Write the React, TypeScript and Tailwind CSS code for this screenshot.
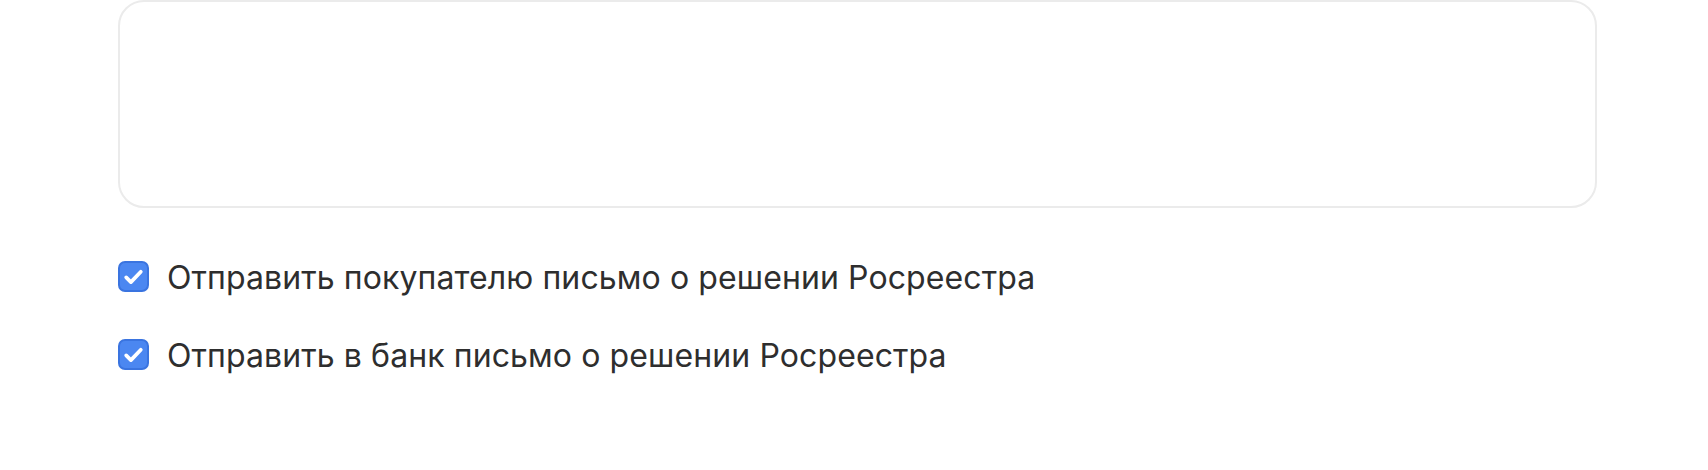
const options = [
  { id: 1, label: "Отправить покупателю письмо о решении Росреестра" },
  { id: 2, label: "Отправить в банк письмо о решении Росреестра" },
];

const App = () => {
  return (
    <div className="w-[1708px] h-[470px] bg-white pl-[118px] pr-[111px] font-['Inter',sans-serif] text-[#2e2e2e]">
      <div className="h-[208px] rounded-[26px] border-2 border-[#ebebeb] bg-white" />

      <div className="mt-[53px] flex flex-col gap-[48px]">
        {options.map((opt) => (
          <label key={opt.id} className="flex items-center gap-[18px] h-[30px]">
            <span className="flex h-[31px] w-[31px] shrink-0 items-center justify-center rounded-[7px] border-2 border-[#3a74e0] bg-[#4b87f1]">
              <svg viewBox="0 0 24 24" className="h-[27px] w-[27px] shrink-0" fill="none">
                <path d="M5.5 12.8l4.2 4.2L18.5 7.8" stroke="white" strokeWidth="3.3" strokeLinecap="round" strokeLinejoin="round" />
              </svg>
            </span>
            <span className="mt-[4px] text-[32px] leading-none tracking-[0.1px]">{opt.label}</span>
          </label>
        ))}
      </div>
    </div>
  );
};

export default App;
